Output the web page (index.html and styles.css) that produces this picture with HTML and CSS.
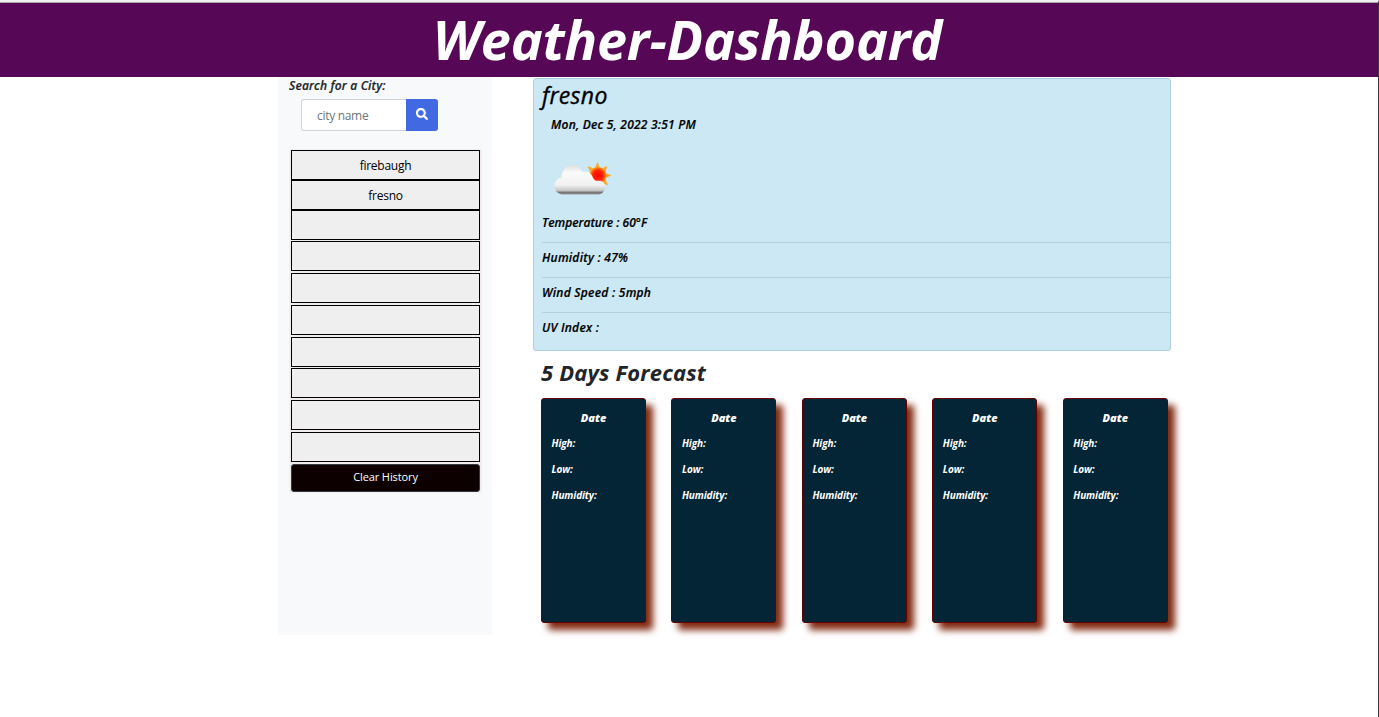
FILE: index.html
```html
<!DOCTYPE html>
<html lang="en">
<head>
<meta charset="utf-8">
<title>Weather-Dashboard</title>
<link rel="stylesheet" href="styles.css">
</head>
<body>
<div class="page">
  <header class="banner"><h1><span>Weather-Dashboard</span></h1></header>
  <main class="layout">
    <aside class="sidebar">
      <h2 class="search-title">Search for a City:</h2>
      <div class="search">
        <input type="text" placeholder="city name" aria-label="City name">
        <button class="search-button" aria-label="Search">
          <svg width="12" height="12" viewBox="0 0 512 512"><path fill="#fff" stroke="#fff" stroke-width="14" d="M505 442.700 405.300 343c-4.500-4.500-10.600-7-17-7H372c27.600-35.300 44-79.700 44-128C416 93.100 322.900 0 208 0S0 93.100 0 208s93.100 208 208 208c48.300 0 92.700-16.400 128-44v16.300c0 6.400 2.500 12.500 7 17l99.700 99.700c9.400 9.400 24.600 9.400 33.900 0l28.300-28.300c9.400-9.400 9.400-24.600.1-34zM208 336c-70.700 0-128-57.200-128-128 0-70.700 57.200-128 128-128 70.700 0 128 57.200 128 128 0 70.700-57.200 128-128 128z"/></svg>
        </button>
      </div>
      <div class="history">
        <button class="entry">firebaugh</button>
        <button class="entry">fresno</button>
        <button class="entry empty"></button>
        <button class="entry empty"></button>
        <button class="entry empty"></button>
        <button class="entry empty"></button>
        <button class="entry empty"></button>
        <button class="entry empty"></button>
        <button class="entry empty"></button>
        <button class="entry empty"></button>
        <button class="clear">Clear History</button>
      </div>
    </aside>
    <section class="content">
      <article class="current">
        <h2 class="city">fresno</h2>
        <p class="time">Mon, Dec 5, 2022 3:51 PM</p>
        <svg class="weather-icon" width="64" height="40" viewBox="0 0 64 40">
          <defs>
            <linearGradient id="cloud" x1="0" y1="0" x2="0" y2="1"><stop offset="0" stop-color="#dedede"/><stop offset=".25" stop-color="#fafafa"/><stop offset=".68" stop-color="#f1f1f1"/><stop offset=".86" stop-color="#c8c8c8"/><stop offset=".94" stop-color="#707070"/><stop offset="1" stop-color="#9a9a9a"/></linearGradient>
            <radialGradient id="sun"><stop offset="0" stop-color="#f00"/><stop offset=".6" stop-color="#ff2408"/><stop offset="1" stop-color="#ff9d20"/></radialGradient>
          </defs>
          <g fill="#f7a92b">
            <path d="m45.500 2 2.500 6h-5z"/>
            <path d="m55.500 6-2.300 6-3.700-3.600z"/>
            <path d="m59.500 15.500-6 2.500v-5z"/>
            <path d="m56 25.500-6.200-2.800 3.700-3.600z"/>
            <path d="m35.500 6 6.200 2.400-3.700 3.600z"/>
          </g>
          <circle cx="46" cy="15.500" r="8.500" fill="url(#sun)"/>
          <path fill="url(#cloud)" d="M10 34.500C5 33.500 2.500 30 2.500 26c0-4.500 2.500-7.500 7-8.500C10 9.500 15 5 20 5c5 0 8.700 3 10 7 5-1.500 9.500 1 11 6 1.500 2.500 3 3 5 2.800 4-.5 6.500 2 7 4.500 .8 4.500-2 8.700-6 9.200z"/>
        </svg>
        <ul class="details">
          <li><span>Temperature : 60°F</span></li>
          <li><span>Humidity : 47%</span></li>
          <li><span>Wind Speed : 5mph</span></li>
          <li><span>UV Index :</span></li>
        </ul>
      </article>
      <h2 class="forecast-title">5 Days Forecast</h2>
      <div class="forecast">
        <article class="day"><h3>Date</h3><p>High:</p><p>Low:</p><p>Humidity:</p></article>
        <article class="day"><h3>Date</h3><p>High:</p><p>Low:</p><p>Humidity:</p></article>
        <article class="day"><h3>Date</h3><p>High:</p><p>Low:</p><p>Humidity:</p></article>
        <article class="day"><h3>Date</h3><p>High:</p><p>Low:</p><p>Humidity:</p></article>
        <article class="day"><h3>Date</h3><p>High:</p><p>Low:</p><p>Humidity:</p></article>
      </div>
    </section>
  </main>
</div>
</body>
</html>
```
FILE: styles.css
```css
* { box-sizing: border-box; }
body { margin: 0; background: #fff; color: #212529; font-family: "Open Sans", "Noto Sans", sans-serif; font-size: 12px; overflow: hidden; }
h1, h2, h3, p, ul { margin: 0; padding: 0; }
ul { list-style: none; }
button, input { font: inherit; margin: 0; }
.page { height: 717px; border-top: 2px solid #f1f1f3; border-right: 1px solid #353a3e; }
.banner { height: 75px; padding-right: 3px; border-top: 1px solid #a9aaa9; background: #560755; color: #fff; text-align: center; }
h1 { font-size: 54px; line-height: 72px; font-weight: 700; font-style: italic; letter-spacing: -.2px; }
.layout { display: flex; padding-left: 278px; }
.sidebar { width: 214px; height: 557.500px; background: #f8f9fb; }
.search-title { height: 22px; padding-left: 11px; font-size: 12px; line-height: 18px; font-weight: 600; font-style: italic; letter-spacing: .180px; }
.search { display: flex; width: 137px; height: 32px; margin-left: 23px; }
.search input { width: 105px; border: 1px solid #ced4da; border-right: 0; border-radius: 3px 0 0 3px; padding: 1px 15px 0; background: #fff; font-size: 12px; letter-spacing: -.3px; }
.search input::placeholder { color: #6c757d; opacity: 1; }
.search-button { display: flex; align-items: center; justify-content: center; width: 32px; padding: 0 0 2px; border: 0; border-radius: 0 3px 3px 0; background: #4169e1; }
.history { display: flex; flex-direction: column; width: 191px; margin: 18.600px 0 0 12px; padding: 0 1px; box-shadow: 0 0 1px #c5c6c8; background: #efebec; }
.entry { height: 30px; padding: 2px 0 0; border: 1px solid #000; background: #efefef; color: #000; font-size: 12px; letter-spacing: -.25px; }
.empty { margin-bottom: 1.750px; }
.clear { height: 28px; padding: 0 0 2px; border: 1px solid #343a40; border-radius: 3px; background: #0d0000; color: #fff; font-size: 11px; letter-spacing: -.1px; }
.content { width: 638px; margin-left: 41px; padding-top: 1px; }
.current { height: 273px; padding-left: 8px; border: 1px solid #afcfda; border-radius: 3px; background: #cce8f4; color: #000; }
.city { height: 36px; font-size: 23px; line-height: 32px; font-weight: 500; font-style: italic; letter-spacing: .300px; -webkit-text-stroke: .350px #000; }
.time { height: 20px; padding-left: 9px; font-size: 12px; line-height: 20px; font-weight: 600; font-style: italic; letter-spacing: .220px; }
.weather-icon { display: block; margin: 25px 0 0 10px; }
.details li { height: 35px; padding-top: 6px; border-bottom: 1px solid #b1cfdc; font-size: 12px; line-height: 18px; font-weight: 600; font-style: italic; letter-spacing: .260px; }
.details li:first-child { height: 43px; padding-top: 14px; letter-spacing: 0; }
.details li:last-child { border: 0; }
.time, .details li, .search-title { -webkit-text-stroke: .200px currentColor; }
.forecast-title { height: 47px; padding-left: 8px; font-size: 22px; line-height: 42px; font-weight: 700; font-style: italic; letter-spacing: .160px; }
.forecast { display: flex; gap: 25.450px; padding-left: 8px; }
.day { flex: 0 0 105px; height: 225px; padding: 10px 10px 0; border: 1px solid #650000; border-radius: 3px; background: #032535; color: #fff; box-shadow: 7px 7px 7px #822b12; font-style: italic; }
.day h3 { height: 21px; font-size: 11px; line-height: 18px; font-weight: 800; text-align: center; letter-spacing: -.05px; }
.day p { height: 26px; margin-left: -.5px; font-size: 10px; line-height: 26px; font-weight: 700; letter-spacing: -.1px; white-space: nowrap; }
```
